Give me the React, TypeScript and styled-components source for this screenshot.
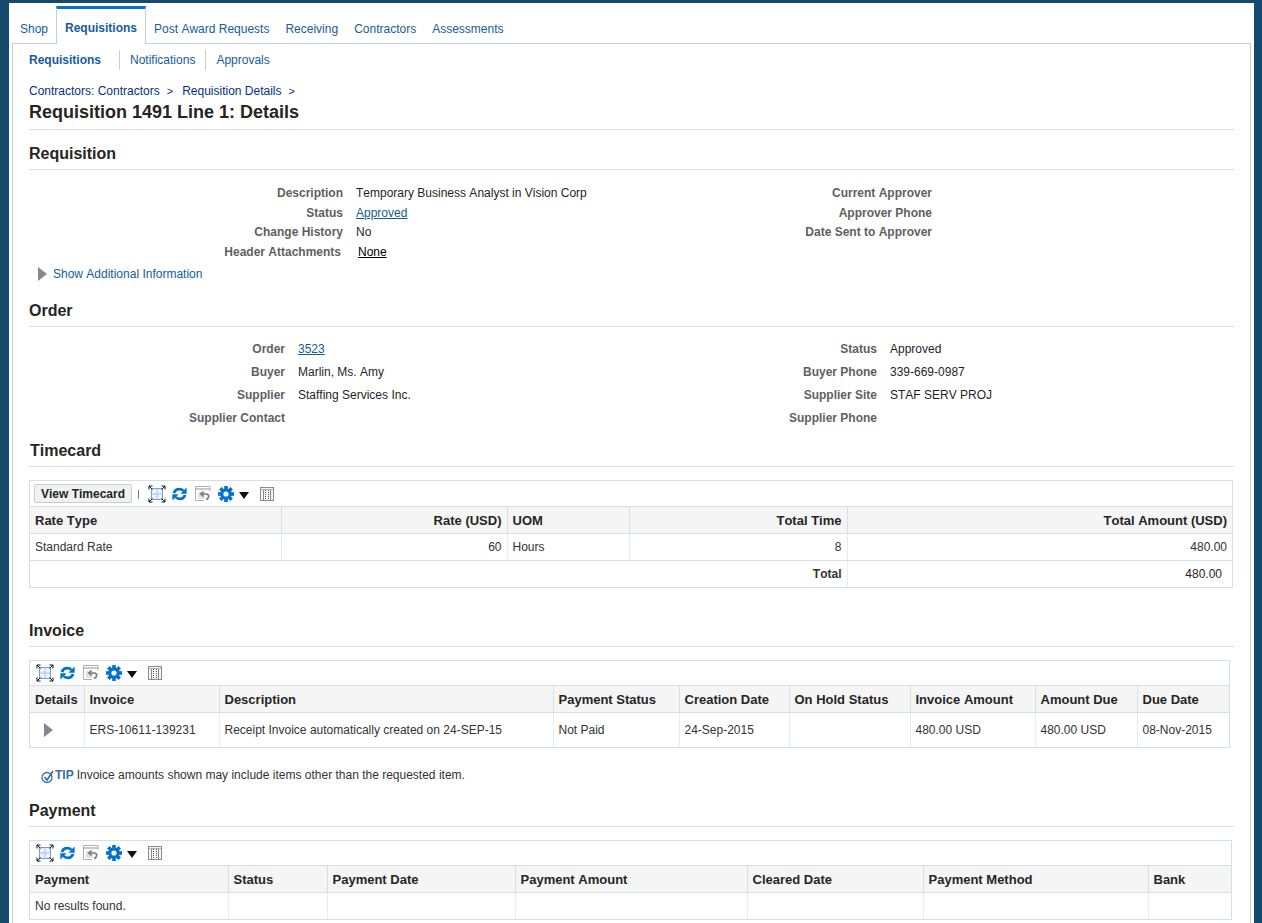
import React from "react";
import styled, { createGlobalStyle } from "styled-components";

const Global = createGlobalStyle`
  html, body { margin: 0; padding: 0; height: 923px; overflow: hidden; background: #164a6c; }
  body { font-family: "Liberation Sans", Arial, sans-serif; font-size: 12px; color: #252525; font-kerning: none; }
`;

const Page = styled.div`
  margin: 3px 8px 0 9px;
  height: 920px;
  background: #fff;
  padding: 0 3px;
  overflow: hidden;
`;
const TabBar = styled.div`
  display: flex;
  height: 41px;
  align-items: flex-end;
  position: relative;
  z-index: 1;
`;
const Tab = styled.a<{ $active?: boolean }>`
  display: block;
  box-sizing: border-box;
  padding: 0 8px;
  height: ${(p) => (p.$active ? "38px" : "40px")};
  line-height: ${(p) => (p.$active ? "39px" : "50px")};
  color: #145c9e;
  font-weight: ${(p) => (p.$active ? "bold" : "normal")};
  ${(p) => p.$active && "background: #fff; border: 1px solid #c4ced7; border-top: 3px solid #0572ce; border-bottom: 0;"}
`;
const Panel = styled.div`
  border: 1px solid #c4ced7;
  border-bottom: 0;
  margin-top: -1px;
  padding: 0 16px;
  height: 900px;
`;
const SubTabs = styled.div`
  display: flex;
  margin: 6px 0 0;
  height: 20px;
  line-height: 20px;
`;
const SubTab = styled.a<{ $active?: boolean; $last?: boolean }>`
  color: #145c9e;
  font-weight: ${(p) => (p.$active ? "bold" : "normal")};
  padding: ${(p) => (p.$active ? "0 18px 0 0" : "0 10px 0 10px")};
  ${(p) => !p.$last && "border-right: 1px solid #c4ced7;"}
`;
const Crumbs = styled.div`
  margin-top: 14px;
  height: 14px;
  line-height: 14px;
  color: #003286;
  display: flex;
`;
const CrumbSep = styled.span`
  margin: 0 9px 0 7px;
  font-size: 11px;
`;
const Title = styled.h1`
  margin: 3px 0 0;
  font-size: 18px;
  line-height: 22px;
  height: 28px;
  font-weight: bold;
  color: #252525;
  border-bottom: 1px solid #d6dfe6;
`;
const Heading = styled.h2<{ $top: number; $indent?: number }>`
  margin: ${(p) => p.$top}px 0 0;
  font-size: 16px;
  line-height: 20px;
  height: 25px;
  font-weight: bold;
  color: #252525;
  border-bottom: 1px solid #d6dfe6;
  padding-left: ${(p) => p.$indent ?? 0}px;
`;
const Fields = styled.div<{ $cols: string; $rows: string; $top: number }>`
  display: grid;
  grid-template-columns: ${(p) => p.$cols};
  grid-template-rows: ${(p) => p.$rows};
  column-gap: 13px;
  margin-top: ${(p) => p.$top}px;
  align-items: center;
`;
const Label = styled.div<{ $shift?: number }>`
  text-align: right;
  font-weight: bold;
  color: #5f5f5f;
  padding-right: ${(p) => p.$shift ?? 0}px;
`;
const Value = styled.div`
  color: #1f1f1f;
`;
const ValueLink = styled.a`
  color: #145c8e;
  text-decoration: underline;
`;
const NoneLink = styled.a`
  color: #000;
  text-decoration: underline;
  margin-left: 2px;
`;
const Disclosure = styled.div`
  display: flex;
  align-items: center;
  height: 17px;
  margin: 3px 0 0 9px;
  color: #145c9e;
  gap: 6px;
`;
const Triangle = styled.span`
  display: block;
  width: 0;
  height: 0;
  border-left: 9px solid #7f8a93;
  border-top: 7px solid transparent;
  border-bottom: 7px solid transparent;
`;
const TableBox = styled.div<{ $top: number; $width: number }>`
  margin-top: ${(p) => p.$top}px;
  width: ${(p) => p.$width}px;
  box-sizing: border-box;
  border: 1px solid #d6dfe6;
  border-bottom: 0;
`;
const Toolbar = styled.div<{ $h: number; $pad: number }>`
  display: flex;
  align-items: center;
  height: ${(p) => p.$h}px;
  padding-left: ${(p) => p.$pad}px;
  box-sizing: border-box;
`;
const ToolButton = styled.button`
  height: 19px;
  width: 98px;
  padding: 0;
  border: 1px solid #c4ced7;
  border-radius: 2px;
  background: #f0f2f2;
  font: bold 12px "Liberation Sans", Arial, sans-serif;
  font-kerning: none;
  color: #252525;
`;
const ToolSep = styled.span`
  width: 1px;
  height: 9px;
  background: #7a7a7a;
  margin: 2px 9px 0 6px;
`;
const Icons = styled.div`
  display: flex;
  align-items: center;
  svg { display: block; flex: none; }
`;
const Table = styled.table`
  width: 100%;
  border-collapse: collapse;
  table-layout: fixed;
`;
const Th = styled.th<{ $right?: boolean }>`
  box-sizing: border-box;
  height: 27px;
  padding: 0 5px;
  font-size: 13px;
  line-height: 15px;
  font-weight: bold;
  color: #252525;
  background: #f5f5f5;
  text-align: ${(p) => (p.$right ? "right" : "left")};
  border-top: 1px solid #d6dfe6;
  border-bottom: 1px solid #d6dfe6;
  border-left: 1px solid #d6dfe6;
  &:first-child { border-left: 0; }
  white-space: nowrap;
`;
const Td = styled.td<{ $right?: boolean; $h: number; $bold?: boolean }>`
  box-sizing: border-box;
  height: ${(p) => p.$h}px;
  padding: 0 5px;
  color: #333;
  font-weight: ${(p) => (p.$bold ? "bold" : "normal")};
  text-align: ${(p) => (p.$right ? "right" : "left")};
  border-bottom: 1px solid #d6dfe6;
  border-left: 1px solid #e6ebef;
  &:first-child { border-left: 0; }
  white-space: nowrap;
`;
const TotalValue = styled.span`
  margin-right: 5px;
  color: #252525;
`;
const DetailTriangle = styled(Triangle)`
  margin-left: 9px;
`;
const Tip = styled.div`
  display: flex;
  align-items: center;
  margin: 20px 0 0 12px;
  height: 14px;
  line-height: 14px;
  color: #333;
`;
const TipWord = styled.b`
  color: #3a6ea5;
  margin-right: 3px;
`;

const Maximize = () => (
  <svg width="18" height="18" viewBox="0 0 18 18" fill="none" style={{ marginRight: 6 }}>
    <rect x="3.5" y="3.5" width="11" height="11" fill="#eef3fb" stroke="#6f9ae0" />
    <path d="M3.5 9h11M9 3.5v11" stroke="#a9c3ee" />
    <path d="M1 4.5V1h3.5M13.5 1H17v3.5M17 13.5V17h-3.5M4.5 17H1v-3.5M1 1l3.5 3.5M17 1l-3.5 3.5M17 17l-3.5-3.5M1 17l3.5-3.5" stroke="#111" />
  </svg>
);
const Refresh = () => (
  <svg width="15" height="14" viewBox="0 0 15 14" fill="none" style={{ marginRight: 8 }}>
    <path d="M2 6.2C2.6 3.8 4.8 2.2 7.4 2.2c1.8 0 3 .7 3.9 1.7" stroke="#0572ce" strokeWidth="2.8" />
    <path d="M14.6.6v6.2H8.4Z" fill="#0572ce" />
    <path d="M13 7.8c-.6 2.4-2.8 4-5.4 4-1.8 0-3-.7-3.9-1.7" stroke="#0572ce" strokeWidth="2.8" />
    <path d="M.4 13.4V7.2h6.2Z" fill="#0572ce" />
  </svg>
);
const Detach = () => (
  <svg width="16" height="16" viewBox="0 0 16 16" fill="none" style={{ marginRight: 7 }}>
    <path d="M9 14.5H.5V.5h14.5V5" stroke="#b0b0b0" />
    <path d="M1 3h14" stroke="#b0b0b0" strokeWidth="1.4" />
    <rect x="3" y="6" width="7" height="7" fill="#e2e2e2" />
    <path d="M8.5 5.5 5.8 8l2.7 2.5" stroke="#7a7a7a" strokeWidth="1.6" />
    <path d="M6.5 8H11c2.2 0 3.2 1.6 2.4 3.4-.4.9-1.2 1.7-2.2 2.3" stroke="#7a7a7a" strokeWidth="1.7" />
  </svg>
);
const Gear = () => (
  <svg width="16" height="16" viewBox="0 0 16 16" style={{ marginRight: 5 }}>
    <g fill="#0572ce">
      {[0, 45, 90, 135, 180, 225, 270, 315].map((a) => (
        <rect key={a} x="6.2" y="0" width="3.6" height="4" transform={`rotate(${a} 8 8)`} />
      ))}
    </g>
    <circle cx="8" cy="8" r="4.2" fill="none" stroke="#0572ce" strokeWidth="3.2" />
  </svg>
);
const Caret = () => (
  <svg width="10" height="7" viewBox="0 0 10 7" style={{ marginRight: 11, marginTop: 3 }}>
    <path d="M0 0h10L5 7Z" fill="#111" />
  </svg>
);
const Columns = () => (
  <svg width="14" height="14" viewBox="0 0 14 14" fill="none" shapeRendering="crispEdges">
    <rect x=".5" y=".5" width="13" height="13" fill="#f6f6f6" stroke="#8a8a8a" />
    <path d="M1 2.5h12" stroke="#b5b5b5" />
    <path d="M3.5 3v10M10.5 3v10" stroke="#8a8a8a" />
    <path d="M5.5 3v10M8.5 3v10" stroke="#555" strokeDasharray="1 1" />
  </svg>
);
const ToolIcons = () => (
  <Icons>
    <Maximize />
    <Refresh />
    <Detach />
    <Gear />
    <Caret />
    <Columns />
  </Icons>
);
const TipIcon = () => (
  <svg width="14" height="14" viewBox="0 0 14 14" fill="none" style={{ marginTop: 3 }}>
    <circle cx="6" cy="7.5" r="5" stroke="#3a6ea5" strokeWidth="1.3" />
    <path d="M3.5 7 6 10l6-9" stroke="#3a6ea5" strokeWidth="1.7" />
  </svg>
);

const ColSet = ({ widths }: { widths: number[] }) => (
  <colgroup>
    {widths.map((w, i) => (
      <col key={i} style={{ width: w }} />
    ))}
  </colgroup>
);

const tabs = ["Post Award Requests", "Receiving", "Contractors", "Assessments"];
const invoiceHead = ["Details", "Invoice", "Description", "Payment Status", "Creation Date", "On Hold Status", "Invoice Amount", "Amount Due", "Due Date"];
const invoiceRow = ["ERS-10611-139231", "Receipt Invoice automatically created on 24-SEP-15", "Not Paid", "24-Sep-2015", "", "480.00 USD", "480.00 USD", "08-Nov-2015"];
const paymentHead = ["Payment", "Status", "Payment Date", "Payment Amount", "Cleared Date", "Payment Method", "Bank"];

export default function App() {
  return (
    <>
      <Global />
      <Page>
        <TabBar>
          <Tab>Shop</Tab>
          <Tab $active>Requisitions</Tab>
          {tabs.map((t) => (
            <Tab key={t}>{t}</Tab>
          ))}
        </TabBar>
        <Panel>
          <SubTabs>
            <SubTab $active>Requisitions</SubTab>
            <SubTab>Notifications</SubTab>
            <SubTab $last>Approvals</SubTab>
          </SubTabs>
          <Crumbs>
            Contractors: Contractors<CrumbSep>&gt;</CrumbSep>Requisition Details<CrumbSep>&gt;</CrumbSep>
          </Crumbs>
          <Title>Requisition 1491 Line 1: Details</Title>

          <Heading $top={14}>Requisition</Heading>
          <Fields $cols="314px 363px 200px 1fr" $rows="20px 19px 20px 20px" $top={13}>
            <Label>Description</Label>
            <Value>Temporary Business Analyst in Vision Corp</Value>
            <Label>Current Approver</Label>
            <Value />
            <Label>Status</Label>
            <Value><ValueLink>Approved</ValueLink></Value>
            <Label>Approver Phone</Label>
            <Value />
            <Label>Change History</Label>
            <Value>No</Value>
            <Label>Date Sent to Approver</Label>
            <Value />
            <Label $shift={2}>Header Attachments</Label>
            <Value><NoneLink>None</NoneLink></Value>
          </Fields>
          <Disclosure>
            <Triangle />
            Show Additional Information
          </Disclosure>

          <Heading $top={19}>Order</Heading>
          <Fields $cols="256px 366px 200px 1fr" $rows="repeat(4, 23px)" $top={10}>
            <Label>Order</Label>
            <Value><ValueLink>3523</ValueLink></Value>
            <Label>Status</Label>
            <Value>Approved</Value>
            <Label>Buyer</Label>
            <Value>Marlin, Ms. Amy</Value>
            <Label>Buyer Phone</Label>
            <Value>339-669-0987</Value>
            <Label>Supplier</Label>
            <Value>Staffing Services Inc.</Value>
            <Label>Supplier Site</Label>
            <Value>STAF SERV PROJ</Value>
            <Label>Supplier Contact</Label>
            <Value />
            <Label>Supplier Phone</Label>
            <Value />
          </Fields>

          <Heading $top={12} $indent={1}>Timecard</Heading>
          <TableBox $top={13} $width={1204}>
            <Toolbar $h={25} $pad={4}>
              <ToolButton>View Timecard</ToolButton>
              <ToolSep />
              <ToolIcons />
            </Toolbar>
            <Table>
              <ColSet widths={[251, 226, 122, 218, 385]} />
              <thead>
                <tr>
                  <Th>Rate Type</Th>
                  <Th $right>Rate (USD)</Th>
                  <Th>UOM</Th>
                  <Th $right>Total Time</Th>
                  <Th $right>Total Amount (USD)</Th>
                </tr>
              </thead>
              <tbody>
                <tr>
                  <Td $h={27}>Standard Rate</Td>
                  <Td $h={27} $right>60</Td>
                  <Td $h={27}>Hours</Td>
                  <Td $h={27} $right>8</Td>
                  <Td $h={27} $right>480.00</Td>
                </tr>
                <tr>
                  <Td $h={27} colSpan={4} $right $bold>Total</Td>
                  <Td $h={27} $right><TotalValue>480.00</TotalValue></Td>
                </tr>
              </tbody>
            </Table>
          </TableBox>

          <Heading $top={33}>Invoice</Heading>
          <TableBox $top={13} $width={1201}>
            <Toolbar $h={24} $pad={6}>
              <ToolIcons />
            </Toolbar>
            <Table>
              <ColSet widths={[54, 135, 334, 126, 110, 121, 125, 102, 92]} />
              <thead>
                <tr>
                  {invoiceHead.map((h) => (
                    <Th key={h}>{h}</Th>
                  ))}
                </tr>
              </thead>
              <tbody>
                <tr>
                  <Td $h={35}><DetailTriangle /></Td>
                  {invoiceRow.map((c, i) => (
                    <Td key={i} $h={35}>{c}</Td>
                  ))}
                </tr>
              </tbody>
            </Table>
          </TableBox>
          <Tip>
            <TipIcon />
            <TipWord>TIP</TipWord>
            Invoice amounts shown may include items other than the requested item.
          </Tip>

          <Heading $top={19}>Payment</Heading>
          <TableBox $top={13} $width={1203}>
            <Toolbar $h={24} $pad={6}>
              <ToolIcons />
            </Toolbar>
            <Table>
              <ColSet widths={[198, 99, 188, 232, 176, 225, 83]} />
              <thead>
                <tr>
                  {paymentHead.map((h) => (
                    <Th key={h}>{h}</Th>
                  ))}
                </tr>
              </thead>
              <tbody>
                <tr>
                  <Td $h={27}>No results found.</Td>
                  {paymentHead.slice(1).map((h) => (
                    <Td key={h} $h={27} />
                  ))}
                </tr>
              </tbody>
            </Table>
          </TableBox>
        </Panel>
      </Page>
    </>
  );
}
